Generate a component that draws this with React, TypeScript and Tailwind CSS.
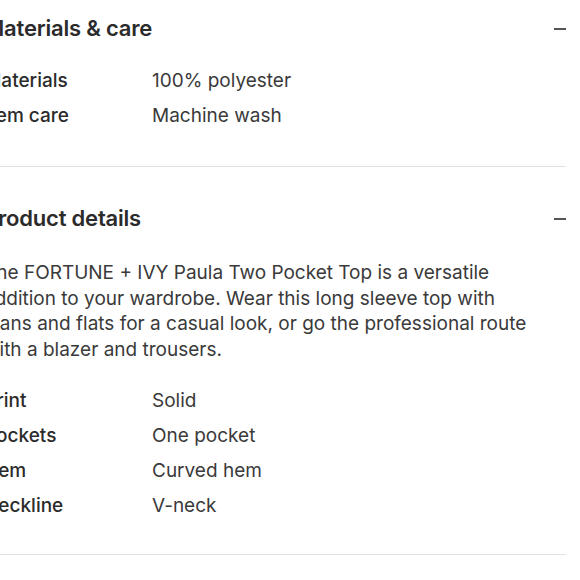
const care = [
  ["Materials", "100% polyester"],
  ["Item care", "Machine wash"],
];

const details = [
  ["Print", "Solid"],
  ["Pockets", "One pocket"],
  ["Hem", "Curved hem"],
  ["Neckline", "V-neck"],
];

function Rows({ rows }: { rows: string[][] }) {
  return (
    <div className="flex flex-col">
      {rows.map(([k, v]) => (
        <div key={k} className="flex h-[34.7px] items-center text-[19px]">
          <span className="w-[168px] shrink-0 font-medium text-[#2b2b2b]">{k}</span>
          <span className="text-[#3a3a3a]">{v}</span>
        </div>
      ))}
    </div>
  );
}

function Header({ title }: { title: string }) {
  return (
    <div className="flex h-[28px] items-center justify-between">
      <h2 className="text-[22px] font-semibold tracking-[-0.2px] text-[#2b2b2b]">{title}</h2>
      <div className="mt-[2px] h-[2px] w-[12px] bg-[#555]" />
    </div>
  );
}

export default function App() {
  return (
    <div
      className="h-[580px] w-[580px] overflow-hidden bg-white"
      style={{ fontFamily: "Inter, 'Noto Sans', sans-serif" }}
    >
      <div className="-ml-[16px] w-[582px]">
        <section className="border-b border-[#e2e2e2] pb-[33px] pt-[14px]">
          <Header title="Materials & care" />
          <div className="mt-[22px]">
            <Rows rows={care} />
          </div>
        </section>
        <section className="border-b border-[#e2e2e2] pb-[31px] pt-[37px]">
          <Header title="Product details" />
          <p className="mt-[28px] w-[560px] text-[19px] leading-[25.5px] text-[#3a3a3a]">
            The FORTUNE + IVY Paula Two Pocket Top is a versatile addition to your
            wardrobe. Wear this long sleeve top with jeans and flats for a casual
            look, or go the professional route with a blazer and trousers.
          </p>
          <div className="mt-[22px]">
            <Rows rows={details} />
          </div>
        </section>
      </div>
    </div>
  );
}
